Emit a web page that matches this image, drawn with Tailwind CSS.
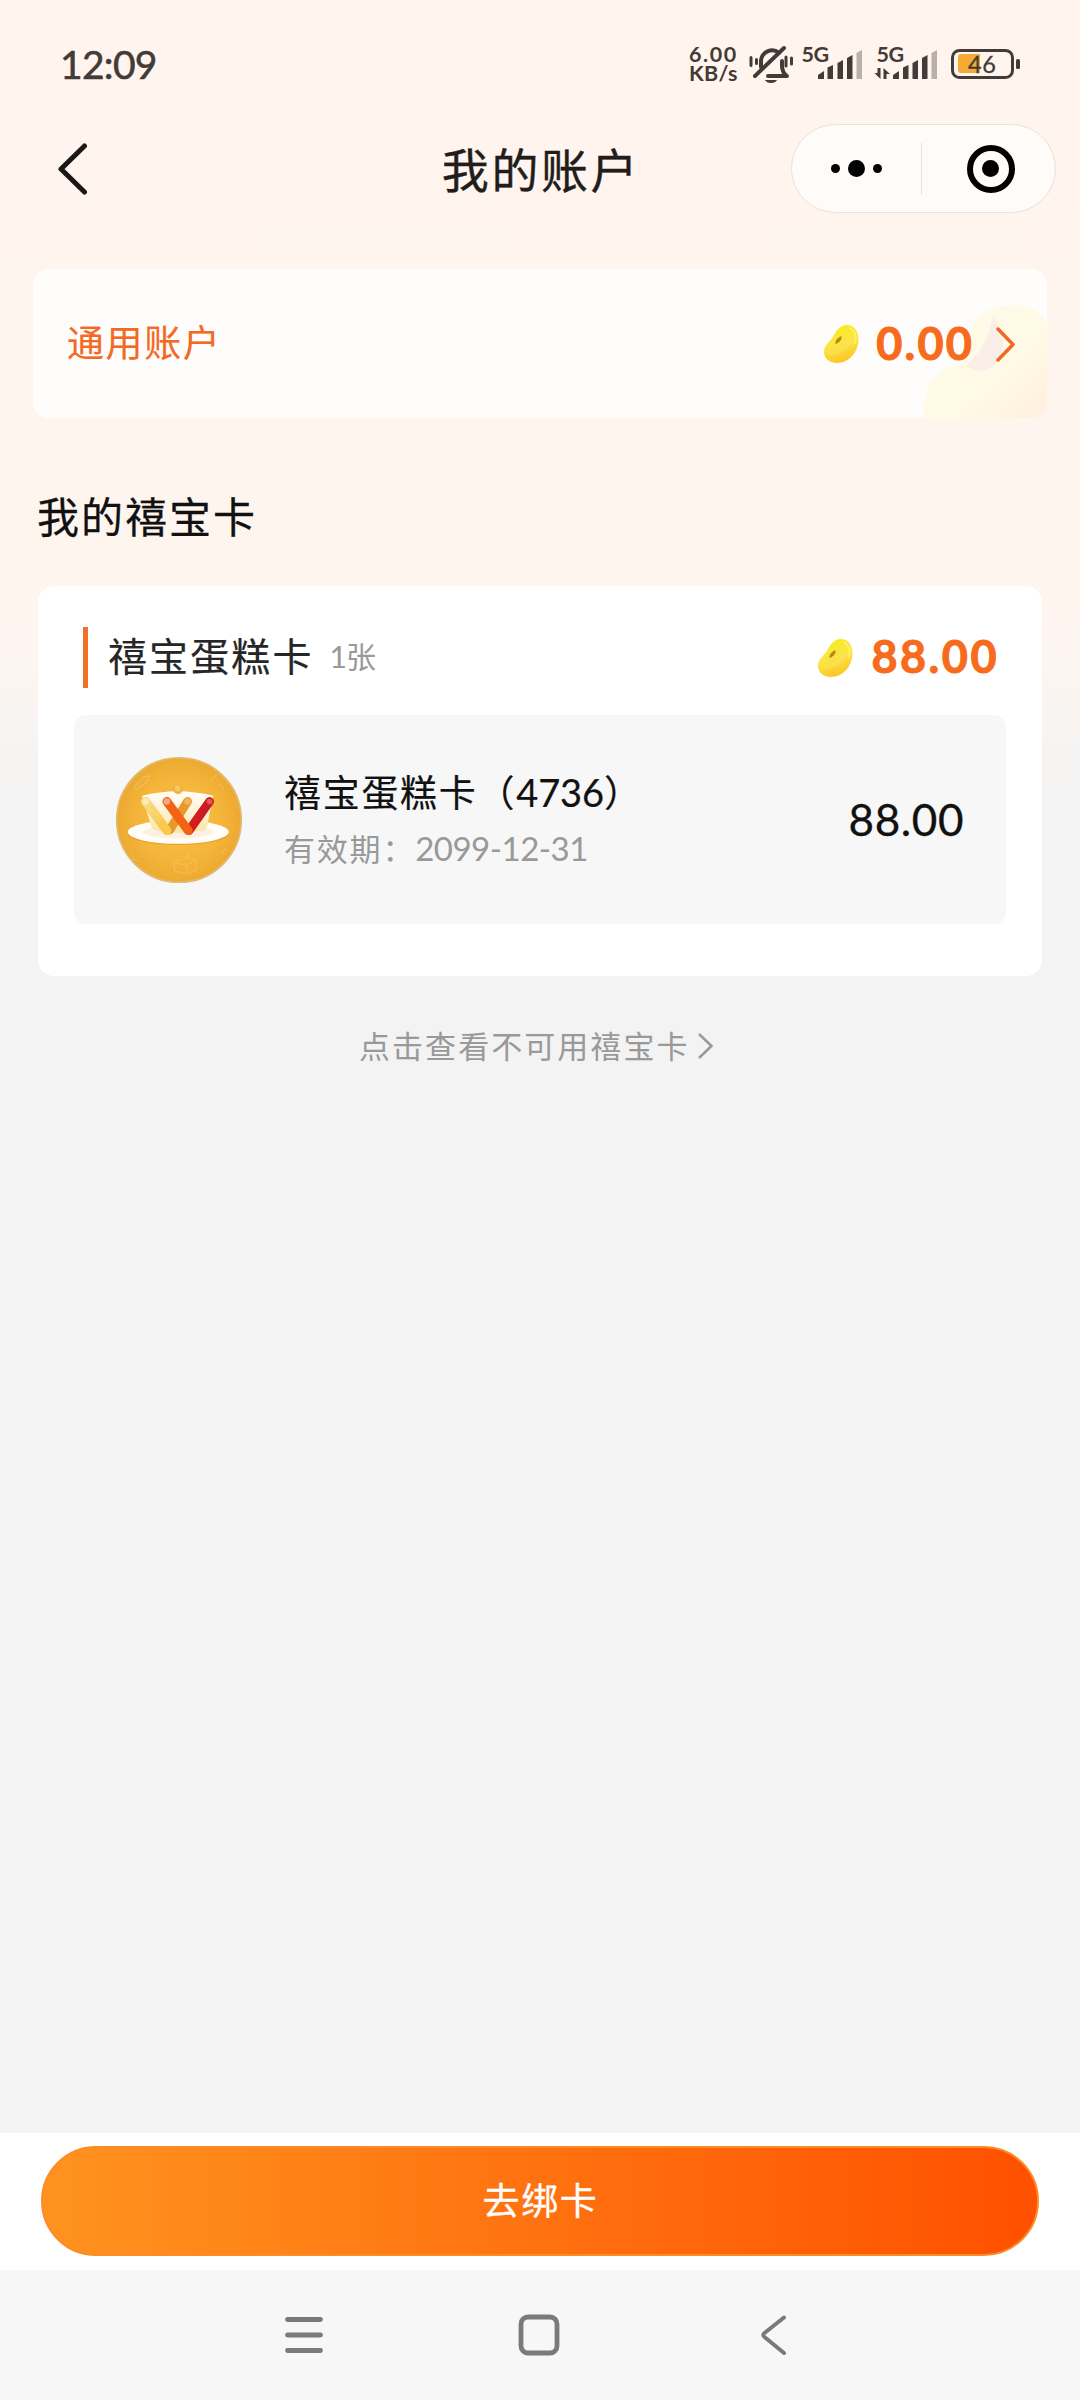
<!DOCTYPE html>
<html lang="zh-CN">
<head>
<meta charset="utf-8">
<title>我的账户</title>
<script src="https://cdn.jsdelivr.net/npm/@tailwindcss/browser@4"></script>
</head>
<body class="w-[1080px] h-[2400px] overflow-hidden flex flex-col bg-[#f3f3f3] bg-[linear-gradient(180deg,#fff5ee_0px,#fff5ef_580px,#fdf5f0_660px,#f7f4f2_730px,#f3f3f3_810px)] font-['Lato','Noto_Sans_CJK_SC',sans-serif] text-[#111]">

<svg width="0" height="0" class="absolute">
  <defs>
    <linearGradient id="beanFill" x1="0.3" y1="0" x2="0.6" y2="1"><stop offset="0" stop-color="#f8ec1c"/><stop offset=".5" stop-color="#fbe447"/><stop offset="1" stop-color="#fbc41f"/></linearGradient>
    <symbol id="bean" viewBox="0 0 36 40">
      <path d="M22 1C29 0 34 6 34.500 14C35 28 25 39 13 39C5 39 0 34 0 28C0 21 5 19 8.500 13.500C12 7 15 2 22 1z" fill="url(#beanFill)"/>
      <path d="M26 4c5 3 7 9 5 15" fill="none" stroke="#fdf067" stroke-width="2" stroke-linecap="round"/>
      <path d="M6 29c7-1 16-3 20-12" fill="none" stroke="#fdec70" stroke-width="5" stroke-linecap="round" opacity=".3"/>
      <path d="M17.500 12c.4 4-2 6.500-6 8-.6-3 2-6.500 6-8z" fill="#b48a12"/>
    </symbol>
  </defs>
</svg>

<!-- Status bar -->
<header class="h-[120px] shrink-0 flex items-start justify-between text-[#433b37]">
  <div class="ml-[60px] mt-[40px] text-[39px] leading-[48px] font-normal [-webkit-text-stroke:0.6px_#433b37] tracking-[-0.7px]">12:09</div>
  <div class="flex items-start pt-[40px] mr-[58px]">
    <div class="w-[59px] text-[21.500px] leading-[18.500px] font-bold mt-[5px] whitespace-nowrap"><div class="tracking-[1.600px]">6.00</div><div class="tracking-[0.300px]">KB/s</div></div>
    <svg width="332" height="50" viewBox="748 40 332 50" class="-mr-[58px]" fill="none" stroke="#433b37">
      <g stroke-width="4" stroke-linecap="round" stroke-linejoin="round">
        <path d="M761 67V61a11 11 0 0 1 18-8"/><path d="M755 76L784 48"/>
        <path d="M768 76h19c-4-3-5-6-5-10v-5"/>
        <path d="M751 58v8M756.500 60v4" transform="translate(0,-.5)" stroke-width="3"/>
        <path d="M786 57v9M791.500 58v6" stroke-width="3"/>
      </g>
      <path d="M765 80h12q-1.500 3-6 3t-6-3z" fill="#433b37" stroke="none"/>
      <g fill="#433b37" stroke="none">
        <path d="M818 79v-4l6-4v8zM827.500 79V67.500l5.500-2.500v14zM837.500 79V63l5.500-3v19zM847 79V58l5.500-3v24z"/>
        <path d="M856.500 79V53l5.500-3v29z" fill="#b9b0ac"/>
        <path d="M893 79v-4l6-4v8zM903 79V67.500l5.500-2.500v14zM912.500 79V63l5.500-3v19zM922 79V58l5.500-3v24z"/>
        <path d="M931.500 79V53l5.500-3v29z" fill="#b9b0ac"/>
        <path d="M877.500 68h3v11l-6-6h3zM883.500 79V68l6.500 6h-3.500v5z"/>
        <g font-family="Lato" font-weight="700" font-size="21.500"><text x="801.500" y="62" textLength="27.500">5G</text><text x="876.500" y="62" textLength="27.500">5G</text></g>
      </g>
      <rect x="952.500" y="50.500" width="60" height="27" rx="7" stroke-width="3"/>
      <path d="M961 54h19v19h-19a3 3 0 0 1-3-3V57a3 3 0 0 1 3-3z" fill="#f4ab35" stroke="none"/>
      <rect x="1016" y="59" width="4" height="10" rx="1.500" fill="#433b37" stroke="none"/>
      <text x="968" y="72.500" font-family="Lato" font-size="23.500" textLength="28" fill="#433b37" stroke-width=".3">46</text>
    </svg>
  </div>
</header>

<!-- Navigation bar -->
<nav class="h-[97px] shrink-0 grid grid-cols-[1fr_auto_1fr] items-center pr-6">
  <svg class="ml-[58px]" width="32" height="54" viewBox="0 0 32 54" fill="none" stroke="#191817" stroke-width="5" stroke-linecap="round" stroke-linejoin="round"><path d="M26.500 4L3 27l23.500 23"/></svg>
  <h1 class="text-[47px] leading-[60px] tracking-[2.600px] text-[#221d1b] mt-[3px] ml-[1px] mr-[-25px] [-webkit-text-stroke:0.4px_#221d1b]">我的账户</h1>
  <div class="justify-self-end w-[265px] h-[89px] rounded-full border border-[#e9e1dc] bg-[#fffbf8] flex items-center">
    <div class="flex-1 flex items-center justify-center gap-[8px] border-r border-[#e6e1de] h-[52px]">
      <i class="size-[9px] rounded-full bg-black"></i><i class="size-[17px] rounded-full bg-black"></i><i class="size-[9px] rounded-full bg-black"></i>
    </div>
    <div class="flex-1 flex items-center justify-center pl-[4px]">
      <span class="size-[48px] rounded-full border-[6px] border-black flex items-center justify-center"><i class="size-[17px] rounded-full bg-black"></i></span>
    </div>
  </div>
</nav>

<main class="flex-1 flex flex-col">
  <!-- General account -->
  <section class="relative overflow-hidden mt-[52px] mx-[33px] h-[149px] rounded-[16px] bg-[#fffdfc] flex items-center justify-between pl-[34px] pr-[30px]">
    <svg class="absolute right-0 bottom-0" width="124" height="116" viewBox="0 0 124 116">
      <defs><linearGradient id="ghost" x1="0" y1="0" x2="1" y2="1"><stop offset="0" stop-color="#fffbe8"/><stop offset=".6" stop-color="#fffae6"/><stop offset="1" stop-color="#feefdc"/></linearGradient></defs>
      <path d="M1 116C-1 88 10 70 32 64C54 56 42 35 51 20C60 8 76 3 92 3C106 3 116 9 124 20V116z" fill="url(#ghost)"/>
      <path d="M70 14C66 36 57 51 43 64c14 10 27 4 34-8C84 43 79 26 70 14z" fill="#fbeee9"/>
    </svg>
    <span class="relative text-[37px] leading-[48px] tracking-[1.600px] text-[#f26a24] -mt-[2px] [-webkit-text-stroke:0.2px_#f26a24]">通用账户</span>
    <div class="relative flex items-center text-[#f76b1c]">
      <svg width="36" height="40"><use href="#bean"/></svg>
      <span class="ml-[16px] -mt-[2px] text-[45px] leading-[56px] font-bold tracking-[2.200px] [-webkit-text-stroke:1px_#f76b1c]">0.00</span>
      <svg class="ml-[21px]" width="22" height="36" viewBox="0 0 22 36" fill="none" stroke="#ef6a25" stroke-width="3.500" stroke-linecap="round" stroke-linejoin="round"><path d="M3 3l15 15.500L3 34"/></svg>
    </div>
  </section>

  <h2 class="mt-[69px] ml-[37px] text-[42px] leading-[60px] tracking-[2px] [-webkit-text-stroke:0.3px_#111]">我的禧宝卡</h2>

  <!-- Card group -->
  <section class="mt-[39px] ml-[38px] w-[1004px] h-[390px] rounded-[16px] bg-white px-[36px] pt-[41px]">
    <div class="h-[61px] flex items-center pl-[9px] pr-[7px]">
      <i class="w-[5px] h-[61px] bg-[#ef7029]"></i>
      <span class="ml-[20px] -mt-[4px] text-[39px] leading-[52px] tracking-[2.100px] text-[#262626] [-webkit-text-stroke:0.2px_#262626]">禧宝蛋糕卡</span>
      <span class="ml-[16px] -mt-[4px] text-[30px] leading-[44px] text-[#999] tracking-[-0.900px]">1张</span>
      <svg class="ml-auto" width="36" height="40"><use href="#bean"/></svg>
      <span class="ml-[17px] -mt-[3px] text-[45px] leading-[56px] font-bold tracking-[2.500px] text-[#f76b1c] [-webkit-text-stroke:1px_#f76b1c]">88.00</span>
    </div>
    <div class="mt-[27px] h-[209px] rounded-[12px] bg-[#f7f7f7] flex items-center pl-[41px] pr-[42px]">
      <svg width="128" height="128" viewBox="0 0 180 180" class="shrink-0">
        <defs>
          <radialGradient id="disc"><stop offset="0" stop-color="#f8c248"/><stop offset=".65" stop-color="#f4b63a"/><stop offset="1" stop-color="#eda931"/></radialGradient>
          <linearGradient id="cup" x1="0" y1="0" x2="0" y2="1"><stop offset="0" stop-color="#fffefa"/><stop offset=".45" stop-color="#fff3d8"/><stop offset="1" stop-color="#fae4a4"/></linearGradient>
          <linearGradient id="yl" x1="0" y1="0" x2="1" y2="1"><stop offset="0" stop-color="#f9dd8c"/><stop offset="1" stop-color="#f9cf60"/></linearGradient>
          <linearGradient id="rd" x1="1" y1="0" x2="0" y2="1"><stop offset="0" stop-color="#c61c26"/><stop offset="1" stop-color="#d81d1c"/></linearGradient>
        </defs>
        <circle cx="90" cy="90" r="87.500" fill="url(#disc)" stroke="#e3b96b" stroke-width="2.500"/>
        <g fill="none" stroke="#f7ce73" stroke-width="1.500" opacity=".5">
          <path d="M27 43l14-14 8-1-6 10-13 9zM135 34l8-8M144 42q8-6 7 6M22 133l4 13 7 2M150 139q2-9 8-8M82 149l22-7 10 5v14l-12 5-18-4zM82 149l18 5 14-7M100 154l2 12M102 142v-7"/>
        </g>
        <ellipse cx="89" cy="109" rx="71" ry="16" fill="#d98b18" opacity=".55"/>
        <ellipse cx="89" cy="107" rx="71" ry="16.500" fill="#fffdf8"/>
        <ellipse cx="89" cy="107" rx="50" ry="9" fill="#fff1e2"/>
        <path d="M38 56Q88 43 138 56L129 102Q117 108 90 108T52 102z" fill="url(#cup)"/>
        <circle cx="88.500" cy="47" r="6.500" fill="#e7b246"/><circle cx="88" cy="45.500" r="4" fill="#f4c968"/>
        <g fill="none" stroke-linecap="round" stroke-width="12.500">
          <path d="M102 64L77 104" stroke="#e9982b"/>
          <path d="M43 64L73 105" stroke="#f9c94b"/><path d="M43 64l17 23" stroke="url(#yl)"/>
          <path d="M133 64L104 105" stroke="url(#rd)"/>
          <path d="M73 64l30 41" stroke="#f26315"/>
        </g>
        <circle cx="43" cy="64" r="4.500" fill="#fbebb9"/><circle cx="102" cy="64" r="4.500" fill="#f2b45d"/><circle cx="73" cy="64" r="4.500" fill="#f8a687"/><circle cx="133" cy="64" r="4" fill="#de5954"/>
      </svg>
      <div class="ml-[41px] -mt-[2px] flex flex-col">
        <div class="text-[37px] leading-[52px] tracking-[1.700px] whitespace-nowrap [-webkit-text-stroke:0.2px_#111]">禧宝蛋糕卡（<span class="text-[38px] tracking-[-0.100px]">4736</span>）</div>
        <div class="mt-[6px] text-[31px] leading-[46px] tracking-[1.800px] text-[#999] whitespace-nowrap">有效期：<span class="text-[33px] tracking-[-0.500px]">2099-12-31</span></div>
      </div>
      <span class="ml-auto -mt-[2px] text-[44px] leading-[52px] tracking-[0.600px] [-webkit-text-stroke:0.3px_#111]">88.00</span>
    </div>
  </section>

  <!-- Unavailable cards link -->
  <a class="mt-[45px] ml-[359px] flex items-center text-[#999]">
    <span class="text-[31px] leading-[50px] tracking-[2.050px]">点击查看不可用禧宝卡</span>
    <svg class="ml-[7px]" width="18" height="28" viewBox="0 0 18 28" fill="none" stroke="#999" stroke-width="2.500"><path d="M2 2l12.500 12L2 26"/></svg>
  </a>
</main>

<!-- Bind card action -->
<div class="h-[137px] shrink-0 bg-white px-[41px] pt-[13px]">
  <button class="w-full h-[110px] rounded-full border-2 border-[#fb8c27] bg-[linear-gradient(90deg,#ff931f,#ff5000)] bg-origin-border text-white text-[37px] leading-[50px] tracking-[1.600px] flex items-center justify-center [-webkit-text-stroke:0.3px_white] pl-[1px]">去绑卡</button>
</div>

<!-- System navigation -->
<footer class="h-[130px] shrink-0 bg-[#f7f7f7]">
  <svg width="1080" height="130" viewBox="0 0 1080 130" fill="none" stroke="#7a7a7a" stroke-width="4.800" stroke-linecap="round" stroke-linejoin="round">
    <path d="M287.500 49.500h33M287.500 65h33M287.500 80.500h33"/>
    <rect x="521" y="47" width="36" height="36" rx="7"/>
    <path d="M784 47.500L764.500 63q-2.500 2 0 4L784 83" stroke-width="4"/>
  </svg>
</footer>
</body>
</html>
